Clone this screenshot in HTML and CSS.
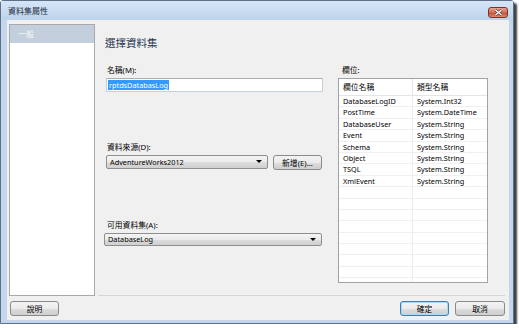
FILE: index.html
```html
<!DOCTYPE html>
<html lang="zh-Hant">
<head>
    <meta charset="UTF-8">
    <title>資料集屬性</title>
    <link rel="stylesheet" href="styles.css">
</head>
<body>
    <div class="window">
        <!-- Title bar -->
        <div class="titlebar">
            <span class="title">資料集屬性</span>
            <span class="close">
                <svg width="9" height="7" viewBox="0 0 9 7">
                    <path d="M1.5 1 L7.5 6 M7.5 1 L1.5 6" stroke="#6b2a1e" stroke-width="2.6" />
                    <path d="M1.5 1 L7.5 6 M7.5 1 L1.5 6" stroke="#fff" stroke-width="1.4" />
                </svg>
            </span>
        </div>

        <div class="client">
            <div class="content">
                <!-- Page list -->
                <div class="nav">
                    <div class="nav-item active">一般</div>
                </div>

                <!-- General page -->
                <div class="main">
                    <div class="form">
                        <h1>選擇資料集</h1>
                        <label class="label">名稱(M):</label>
                        <div class="textbox"><span class="sel">rptdsDatabasLog</span></div>

                        <label class="label spaced">資料來源(D):</label>
                        <div class="row">
                            <div class="combo source">AdventureWorks2012<span class="arrow"></span></div>
                            <button class="btn new-btn">新增(E)...</button>
                        </div>

                        <label class="label spaced">可用資料集(A):</label>
                        <div class="combo dataset">DatabaseLog<span class="arrow"></span></div>
                    </div>

                    <div class="fields">
                        <label class="label">欄位:</label>
                        <div class="listview">
                            <div class="lv-row lv-head"><span>欄位名稱</span><span>類型名稱</span></div>
                            <div class="lv-row"><span>DatabaseLogID</span><span>System.Int32</span></div>
                            <div class="lv-row"><span>PostTime</span><span>System.DateTime</span></div>
                            <div class="lv-row"><span>DatabaseUser</span><span>System.String</span></div>
                            <div class="lv-row"><span>Event</span><span>System.String</span></div>
                            <div class="lv-row"><span>Schema</span><span>System.String</span></div>
                            <div class="lv-row"><span>Object</span><span>System.String</span></div>
                            <div class="lv-row"><span>TSQL</span><span>System.String</span></div>
                            <div class="lv-row"><span>XmlEvent</span><span>System.String</span></div>
                            <div class="lv-row"><span></span><span></span></div>
                            <div class="lv-row"><span></span><span></span></div>
                            <div class="lv-row"><span></span><span></span></div>
                            <div class="lv-row"><span></span><span></span></div>
                            <div class="lv-row"><span></span><span></span></div>
                            <div class="lv-row"><span></span><span></span></div>
                            <div class="lv-row"><span></span><span></span></div>
                            <div class="lv-row"><span></span><span></span></div>
                            <div class="lv-row"><span></span><span></span></div>
                        </div>
                    </div>
                </div>
            </div>

            <!-- Dialog buttons -->
            <div class="footer">
                <button class="btn">說明</button>
                <div class="footer-right">
                    <button class="btn default">確定</button>
                    <button class="btn cancel">取消</button>
                </div>
            </div>
        </div>
    </div>
</body>
</html>
```

FILE: styles.css
```css
* {
    margin: 0;
    padding: 0;
    box-sizing: border-box;
}

body {
    background-color: #fff;
    font-family: 'Noto Sans', 'Noto Sans CJK TC', sans-serif;
    font-size: 7.3px;
    color: #000;
}

/* Window frame */
.window {
    width: 514px;
    height: 324px;
    display: flex;
    flex-direction: column;
    background-color: #c3d6ed;
    border: 1px solid #5f7185;
    border-radius: 3px 3px 0 0;
    box-shadow: 3px 3px 2px rgba(0, 0, 0, 0.75);
}

.titlebar {
    height: 19px;
    display: flex;
    justify-content: space-between;
    align-items: flex-start;
    padding: 0 5px 0 7px;
    background: linear-gradient(#d6e5f6, #bcd3ec);
}

.title {
    font-size: 8px;
    line-height: 19px;
    color: #1b2a3c;
}

.close {
    width: 20px;
    height: 11px;
    margin-top: 6px;
    display: flex;
    align-items: center;
    justify-content: center;
    border: 1px solid #7a3426;
    border-radius: 3px;
    background: linear-gradient(#e7a596, #cf6a55 50%, #c04a34 51%, #d98b75);
}

.client {
    height: 300px;
    margin: 0 4px 0 6px;
    background-color: #f0f0f0;
    display: flex;
    flex-direction: column;
}

.content {
    height: 276px;
    display: flex;
    padding: 4px 4px 0 2px;
}

/* Left page list */
.nav {
    width: 86px;
    height: 272px;
    background-color: #fff;
    border: 1px solid #a9a9a9;
}

.nav-item {
    height: 18px;
    line-height: 18px;
    padding-left: 8px;
    font-size: 8px;
    color: #f5f7f9;
}

.nav-item.active {
    background-color: #c3cfdc;
}

/* Main page */
.main {
    flex: 1;
    height: 272px;
    margin-left: 3px;
    padding: 0 17px 0 7px;
    border-bottom: 1px solid #d5d5d5;
    display: flex;
    justify-content: space-between;
}

.form {
    width: 218px;
    display: flex;
    flex-direction: column;
}

h1 {
    font-size: 10.5px;
    font-weight: normal;
    line-height: 14px;
    margin-top: 12px;
    margin-bottom: 15px;
    color: #1e3250;
}

.label {
    display: block;
    font-size: 7.8px;
    line-height: 10px;
    margin-left: 2px;
    margin-bottom: 3px;
}

.label.spaced {
    margin-top: 50px;
}

.textbox {
    height: 14px;
    margin-left: 1px;
    background-color: #fff;
    border: 1px solid #c5d0db;
    border-top-color: #abadb3;
    padding: 1px 1px;
    line-height: 10px;
}

.sel {
    display: inline-block;
    background-color: #3399ff;
    color: #fff;
    padding: 0 1px;
}

.row {
    display: flex;
    gap: 5px;
    margin-left: 1px;
}

.combo {
    height: 14px;
    line-height: 12px;
    padding-left: 3px;
    position: relative;
    border: 1px solid #8e8f8f;
    border-radius: 2px;
    background: linear-gradient(#f4f4f4, #ebebeb 50%, #dddddd 51%, #cfcfcf);
}

.combo.source {
    width: 162px;
}

.combo.dataset {
    height: 13px;
    line-height: 11px;
    margin-left: -1px;
    width: 218px;
}

.arrow {
    position: absolute;
    right: 5px;
    top: 4px;
    border-left: 3px solid transparent;
    border-right: 3px solid transparent;
    border-top: 3px solid #000;
}

.btn {
    font-family: inherit;
    font-size: 7.8px;
    color: #000;
    height: 15px;
    width: 49px;
    border: 1px solid #8a8a8a;
    border-radius: 3px;
    background: linear-gradient(#f3f3f3, #ebebeb 50%, #dddddd 51%, #cfcfcf);
}

.new-btn {
    width: 49px;
}

/* Fields list */
.fields {
    width: 150px;
    display: flex;
    flex-direction: column;
    padding-top: 41px;
}

.fields .label {
    margin-left: 4px;
}

.listview {
    height: 205px;
    overflow: hidden;
    background-color: #fff;
    border: 1px solid #a0a3a8;
}

.lv-row {
    display: flex;
    height: 11.4px;
    line-height: 11px;
    border-bottom: 1px solid #f0f0f0;
}

.lv-row span {
    padding-left: 4px;
}

.lv-row span:first-child {
    width: 74px;
    border-right: 1px solid #ececec;
}

.lv-head {
    height: 17px;
    line-height: 16px;
    font-size: 7.8px;
    border-bottom: 1px solid #e3e5e8;
}

.lv-head span:first-child {
    border-right-color: #e3e5e8;
}

/* Footer buttons */
.footer {
    display: flex;
    justify-content: space-between;
    padding: 5px 4px 0 3px;
}

.footer-right {
    display: flex;
    gap: 6px;
}

.btn.default {
    border-color: #3c7fb1;
    box-shadow: inset 0 0 0 1px #a8d8f3;
}

.btn.cancel {
    width: 50px;
}
```
